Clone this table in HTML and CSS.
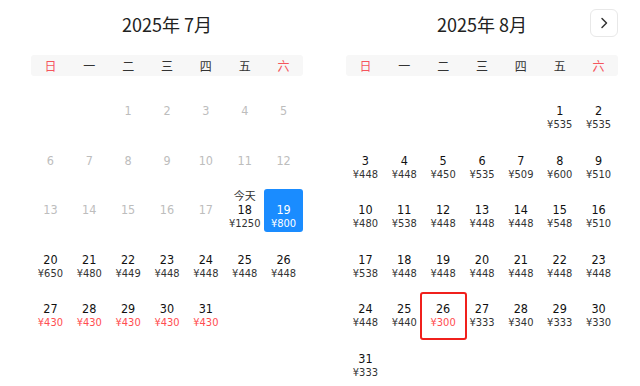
FILE: index.html
```html
<!DOCTYPE html>
<html lang="zh-CN">
<head>
<meta charset="utf-8">
<title>日历</title>
<link rel="stylesheet" href="styles.css">
</head>
<body>
<div class="calendar">
  <section class="month">
    <header class="month-head"><h2 class="title">2025年 7月</h2></header>
    <div class="weekdays"><span class="we">日</span><span>一</span><span>二</span><span>三</span><span>四</span><span>五</span><span class="we">六</span></div>
    <div class="days">
      <div class="day"></div><div class="day"></div>
      <div class="day past"><span class="lbl"></span><span class="num">1</span></div>
      <div class="day past"><span class="lbl"></span><span class="num">2</span></div>
      <div class="day past"><span class="lbl"></span><span class="num">3</span></div>
      <div class="day past"><span class="lbl"></span><span class="num">4</span></div>
      <div class="day past"><span class="lbl"></span><span class="num">5</span></div>
      <div class="day past"><span class="lbl"></span><span class="num">6</span></div>
      <div class="day past"><span class="lbl"></span><span class="num">7</span></div>
      <div class="day past"><span class="lbl"></span><span class="num">8</span></div>
      <div class="day past"><span class="lbl"></span><span class="num">9</span></div>
      <div class="day past"><span class="lbl"></span><span class="num">10</span></div>
      <div class="day past"><span class="lbl"></span><span class="num">11</span></div>
      <div class="day past"><span class="lbl"></span><span class="num">12</span></div>
      <div class="day past"><span class="lbl"></span><span class="num">13</span></div>
      <div class="day past"><span class="lbl"></span><span class="num">14</span></div>
      <div class="day past"><span class="lbl"></span><span class="num">15</span></div>
      <div class="day past"><span class="lbl"></span><span class="num">16</span></div>
      <div class="day past"><span class="lbl"></span><span class="num">17</span></div>
      <div class="day"><span class="lbl">今天</span><span class="num">18</span><span class="price">¥1250</span></div>
      <div class="day sel"><span class="lbl"></span><span class="num">19</span><span class="price">¥800</span></div>
      <div class="day"><span class="lbl"></span><span class="num">20</span><span class="price">¥650</span></div>
      <div class="day"><span class="lbl"></span><span class="num">21</span><span class="price">¥480</span></div>
      <div class="day"><span class="lbl"></span><span class="num">22</span><span class="price">¥449</span></div>
      <div class="day"><span class="lbl"></span><span class="num">23</span><span class="price">¥448</span></div>
      <div class="day"><span class="lbl"></span><span class="num">24</span><span class="price">¥448</span></div>
      <div class="day"><span class="lbl"></span><span class="num">25</span><span class="price">¥448</span></div>
      <div class="day"><span class="lbl"></span><span class="num">26</span><span class="price">¥448</span></div>
      <div class="day"><span class="lbl"></span><span class="num">27</span><span class="price low">¥430</span></div>
      <div class="day"><span class="lbl"></span><span class="num">28</span><span class="price low">¥430</span></div>
      <div class="day"><span class="lbl"></span><span class="num">29</span><span class="price low">¥430</span></div>
      <div class="day"><span class="lbl"></span><span class="num">30</span><span class="price low">¥430</span></div>
      <div class="day"><span class="lbl"></span><span class="num">31</span><span class="price low">¥430</span></div>
    </div>
  </section>
  <section class="month">
    <header class="month-head">
      <h2 class="title">2025年 8月</h2>
      <button class="next" aria-label="下个月"><svg width="12" height="12" viewBox="0 0 12 12"><path d="M4 1.5 L8.5 6 L4 10.5" fill="none" stroke="#333" stroke-width="1.5" stroke-linecap="round" stroke-linejoin="round"/></svg></button>
    </header>
    <div class="weekdays"><span class="we">日</span><span>一</span><span>二</span><span>三</span><span>四</span><span>五</span><span class="we">六</span></div>
    <div class="days">
      <div class="day"></div><div class="day"></div><div class="day"></div><div class="day"></div><div class="day"></div>
      <div class="day"><span class="lbl"></span><span class="num">1</span><span class="price">¥535</span></div>
      <div class="day"><span class="lbl"></span><span class="num">2</span><span class="price">¥535</span></div>
      <div class="day"><span class="lbl"></span><span class="num">3</span><span class="price">¥448</span></div>
      <div class="day"><span class="lbl"></span><span class="num">4</span><span class="price">¥448</span></div>
      <div class="day"><span class="lbl"></span><span class="num">5</span><span class="price">¥450</span></div>
      <div class="day"><span class="lbl"></span><span class="num">6</span><span class="price">¥535</span></div>
      <div class="day"><span class="lbl"></span><span class="num">7</span><span class="price">¥509</span></div>
      <div class="day"><span class="lbl"></span><span class="num">8</span><span class="price">¥600</span></div>
      <div class="day"><span class="lbl"></span><span class="num">9</span><span class="price">¥510</span></div>
      <div class="day"><span class="lbl"></span><span class="num">10</span><span class="price">¥480</span></div>
      <div class="day"><span class="lbl"></span><span class="num">11</span><span class="price">¥538</span></div>
      <div class="day"><span class="lbl"></span><span class="num">12</span><span class="price">¥448</span></div>
      <div class="day"><span class="lbl"></span><span class="num">13</span><span class="price">¥448</span></div>
      <div class="day"><span class="lbl"></span><span class="num">14</span><span class="price">¥448</span></div>
      <div class="day"><span class="lbl"></span><span class="num">15</span><span class="price">¥548</span></div>
      <div class="day"><span class="lbl"></span><span class="num">16</span><span class="price">¥510</span></div>
      <div class="day"><span class="lbl"></span><span class="num">17</span><span class="price">¥538</span></div>
      <div class="day"><span class="lbl"></span><span class="num">18</span><span class="price">¥448</span></div>
      <div class="day"><span class="lbl"></span><span class="num">19</span><span class="price">¥448</span></div>
      <div class="day"><span class="lbl"></span><span class="num">20</span><span class="price">¥448</span></div>
      <div class="day"><span class="lbl"></span><span class="num">21</span><span class="price">¥448</span></div>
      <div class="day"><span class="lbl"></span><span class="num">22</span><span class="price">¥448</span></div>
      <div class="day"><span class="lbl"></span><span class="num">23</span><span class="price">¥448</span></div>
      <div class="day"><span class="lbl"></span><span class="num">24</span><span class="price">¥448</span></div>
      <div class="day"><span class="lbl"></span><span class="num">25</span><span class="price">¥440</span></div>
      <div class="day marked"><span class="lbl"></span><span class="num">26</span><span class="price low">¥300</span></div>
      <div class="day"><span class="lbl"></span><span class="num">27</span><span class="price">¥333</span></div>
      <div class="day"><span class="lbl"></span><span class="num">28</span><span class="price">¥340</span></div>
      <div class="day"><span class="lbl"></span><span class="num">29</span><span class="price">¥333</span></div>
      <div class="day"><span class="lbl"></span><span class="num">30</span><span class="price">¥330</span></div>
      <div class="day"><span class="lbl"></span><span class="num">31</span><span class="price">¥333</span></div>
    </div>
  </section>
</div>
</body>
</html>
```
FILE: styles.css
```css
html, body {
  margin: 0;
  padding: 0;
  background: #fff;
}
body {
  font-family: "DejaVu Sans Condensed", "DejaVu Sans", sans-serif;
  color: #111;
}
.calendar {
  display: flex;
  gap: 43px;
  padding-left: 31px;
}
.month {
  width: 272px;
}
.month-head {
  position: relative;
  height: 48px;
  display: flex;
  align-items: center;
  justify-content: center;
  margin-bottom: 7px;
}
.title {
  margin: 0;
  font-family: "Noto Sans CJK SC", sans-serif;
  font-weight: 400;
  font-size: 18px;
  line-height: 24px;
  color: #222;
}
.next {
  position: absolute;
  right: 0;
  top: 9px;
  width: 28px;
  height: 28px;
  padding: 0;
  box-sizing: border-box;
  border: 1px solid #e8e8e8;
  border-radius: 6px;
  background: #fff;
  display: flex;
  align-items: center;
  justify-content: center;
}
.weekdays {
  display: grid;
  grid-template-columns: repeat(7, 1fr);
  height: 21px;
  align-items: center;
  background: #f7f7f7;
  border-radius: 3px;
  font-family: "Noto Sans CJK SC", sans-serif;
  font-size: 12px;
  line-height: 21px;
  color: #333;
  text-align: center;
}
.weekdays .we {
  color: #f5555d;
}
.days {
  display: grid;
  grid-template-columns: repeat(7, 1fr);
  grid-auto-rows: 43px;
  row-gap: 6.6px;
  margin-top: 14px;
}
.day {
  position: relative;
  display: flex;
  flex-direction: column;
  align-items: center;
  border-radius: 3px;
}
.lbl {
  height: 14px;
  margin-top: -0.5px;
  margin-bottom: 0.5px;
  line-height: 12px;
  font-family: "Noto Sans CJK SC", sans-serif;
  font-size: 11px;
  color: #333;
}
.num {
  height: 14px;
  line-height: 14px;
  font-size: 12.5px;
  color: #111;
}
.price {
  height: 13px;
  line-height: 13px;
  font-size: 11px;
  color: #333;
}
.price.low {
  color: #ff4d50;
}
.past .num {
  color: #bdbdbd;
}
.sel {
  background: #1a8cff;
}
.sel .num,
.sel .price {
  color: #fff;
}
.marked::after {
  content: "";
  position: absolute;
  left: -4px;
  top: 4px;
  width: 47px;
  height: 48px;
  box-sizing: border-box;
  border: 2px solid #f0201c;
  border-radius: 3px;
}
```
